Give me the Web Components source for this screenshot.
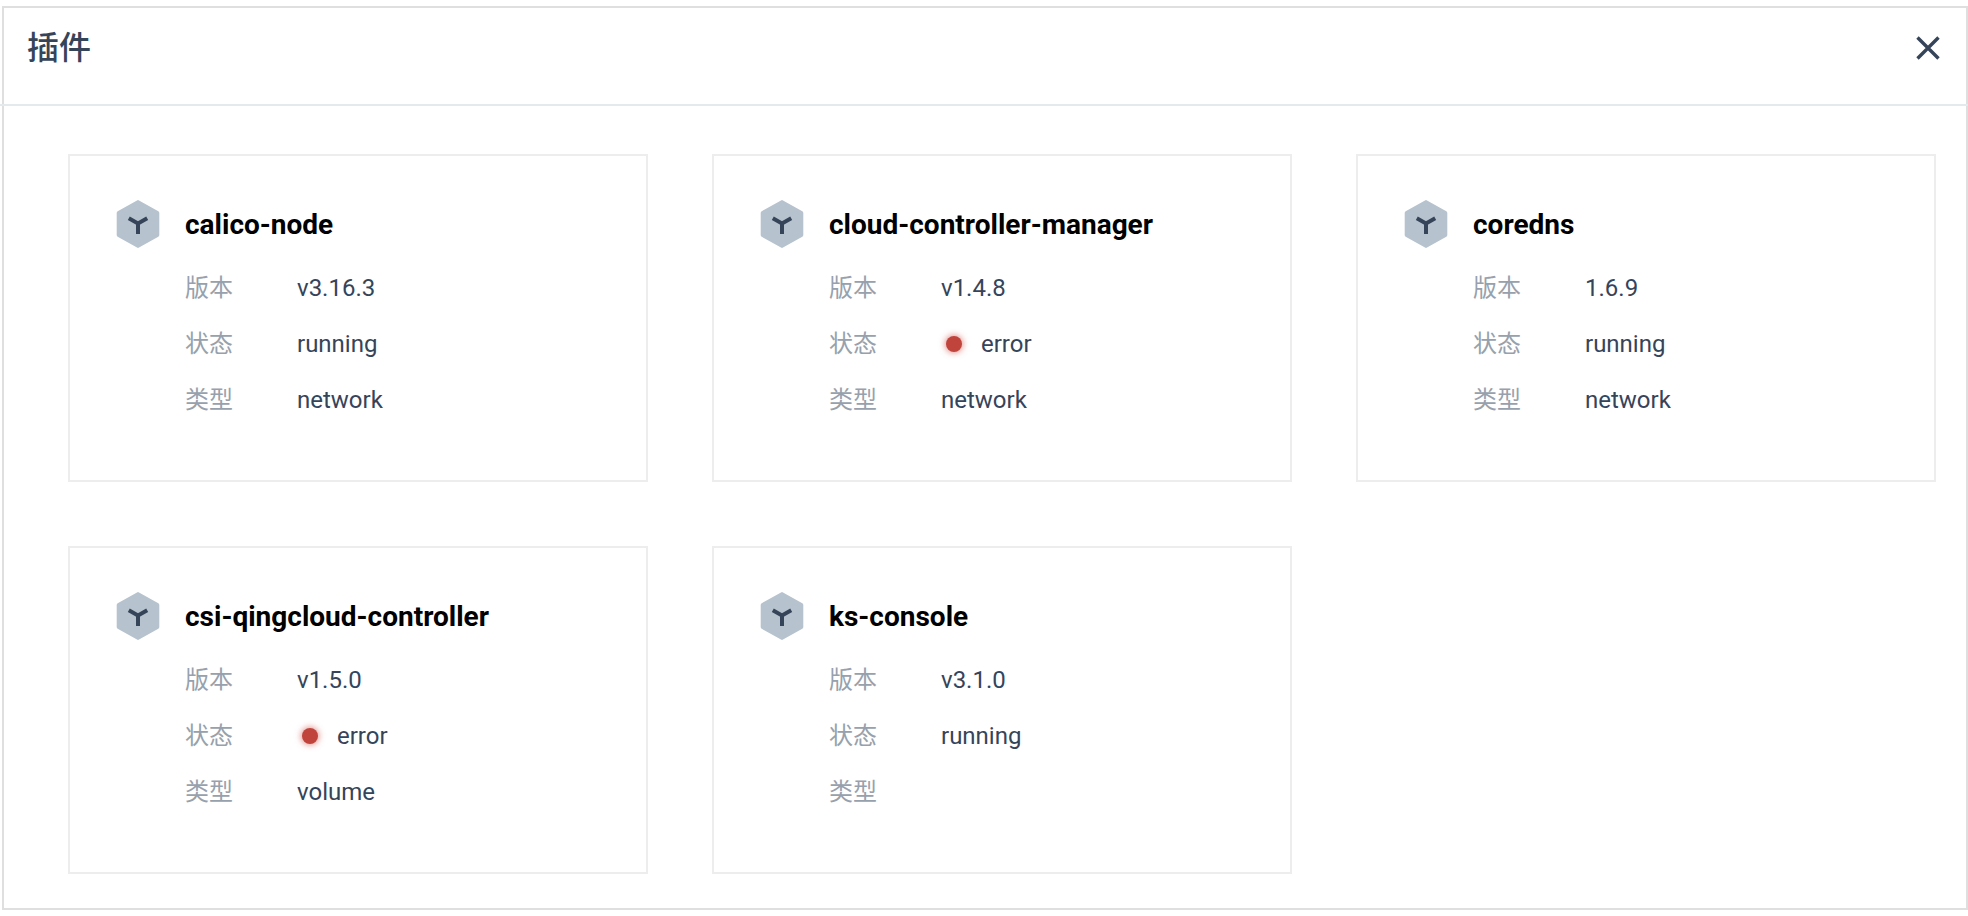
<!DOCTYPE html>
<html lang="zh-CN">
<head>
<meta charset="utf-8">
<meta name="viewport" content="width=device-width, initial-scale=1">
<title>插件</title>
<style>
  body {
    margin: 0;
    background: #fff;
    color: #36445a;
    font-family: Roboto, "Noto Sans CJK SC", sans-serif;
  }
</style>
</head>
<body>
<plugin-panel heading="插件">
  <plugin-card name="calico-node" version="v3.16.3" type="network">running</plugin-card>
  <plugin-card name="cloud-controller-manager" version="v1.4.8" type="network"><status-dot></status-dot>error</plugin-card>
  <plugin-card name="coredns" version="1.6.9" type="network">running</plugin-card>
  <plugin-card name="csi-qingcloud-controller" version="v1.5.0" type="volume"><status-dot></status-dot>error</plugin-card>
  <plugin-card name="ks-console" version="v3.1.0" type="">running</plugin-card>
</plugin-panel>

<template id="panel-template">
  <style>
    :host { display: block; padding: 6px 0 6px 2px; }
    section { border: 2px solid #dfdfdf; }
    header {
      display: flex;
      justify-content: space-between;
      align-items: center;
      height: 96px;
      padding: 0 18px 16px 23px;
      box-sizing: border-box;
    }
    h1 { margin: 0; font-size: 32px; line-height: 48px; font-weight: 500; }
    button {
      display: flex;
      padding: 4px;
      border: 0;
      background: none;
      color: inherit;
      cursor: pointer;
    }
    /* The rule runs through the side borders to the window's edges. */
    hr { margin: 0 -2px 0 -4px; border: 0; height: 2px; background: #e3e9ed; position: relative; }
    .grid {
      display: grid;
      grid-template-columns: repeat(auto-fill, minmax(520px, 1fr));
      gap: 64px;
      padding: 48px 30px 34px 64px;
    }
  </style>
  <section>
    <header>
      <h1></h1>
      <button type="button" aria-label="关闭">
        <svg width="32" height="32" viewBox="0 0 32 32" fill="none" stroke="currentColor" stroke-width="3.400" aria-hidden="true"><path d="M5.500 5.500 26.500 26.500M26.500 5.500 5.500 26.500"/></svg>
      </button>
    </header>
    <hr>
    <div class="grid"><slot></slot></div>
  </section>
</template>

<template id="card-template">
  <style>
    :host {
      display: block;
      box-sizing: border-box;
      min-height: 328px;
      border: 2px solid #ededed;
      padding: 44px 46px;
    }
    article { display: grid; grid-template-columns: 44px 1fr; column-gap: 25px; }
    h2 { margin: 0; font-size: 28px; line-height: 50px; font-weight: 700; color: #000; }
    dl { grid-column: 2; margin: 22px 0 0; display: grid; grid-template-columns: 112px 1fr; font-size: 24px; line-height: 32px; row-gap: 24px; }
    dt { color: #97a1ad; font-weight: 400; }
    dd { margin: 0; display: flex; align-items: center; }
  </style>
  <article>
    <hex-icon></hex-icon>
    <h2></h2>
    <dl>
      <dt>版本</dt><dd class="version"></dd>
      <dt>状态</dt><dd><slot></slot></dd>
      <dt>类型</dt><dd class="type"></dd>
    </dl>
  </article>
</template>

<template id="hex-template">
  <style>:host { display: block; height: 48px; } svg { display: block; }</style>
  <svg width="44" height="48" viewBox="0 0 44 48" aria-hidden="true">
    <path d="M21 .4Q22 -.2 23 .4L42.300 11.200Q43.300 11.800 43.300 13V35Q43.300 36.200 42.300 36.800L23 47.600Q22 48.200 21 47.600L1.700 36.800Q.7 36.200 .7 35V13Q.7 11.800 1.700 11.200Z" fill="#b6c2cd"/>
    <path d="M12.800 18.300 22 23.500 31.200 18.300M22 23V34" fill="none" stroke="#36445a" stroke-width="4"/>
  </svg>
</template>

<template id="dot-template">
  <style>
    :host {
      display: block;
      width: 16px;
      height: 16px;
      margin: 0 19px 0 5px;
      border-radius: 50%;
      background: #c0443c;
      box-shadow: 0 0 6px 1px rgba(202, 70, 60, .6);
    }
  </style>
</template>

<script>
  const stamp = (host, id) => {
    const root = host.attachShadow({ mode: 'open' });
    root.append(document.getElementById(id).content.cloneNode(true));
    return root;
  };

  class HexIcon extends HTMLElement {
    constructor() { super(); stamp(this, 'hex-template'); }
  }

  class StatusDot extends HTMLElement {
    constructor() { super(); stamp(this, 'dot-template'); }
  }

  class PluginCard extends HTMLElement {
    constructor() { super(); stamp(this, 'card-template'); }
    connectedCallback() {
      const find = s => this.shadowRoot.querySelector(s);
      find('h2').textContent = this.getAttribute('name');
      find('.version').textContent = this.getAttribute('version');
      find('.type').textContent = this.getAttribute('type');
    }
  }

  class PluginPanel extends HTMLElement {
    constructor() { super(); stamp(this, 'panel-template'); }
    connectedCallback() {
      this.shadowRoot.querySelector('h1').textContent = this.getAttribute('heading');
      this.shadowRoot.querySelector('button').addEventListener('click', () => this.remove());
    }
  }

  customElements.define('hex-icon', HexIcon);
  customElements.define('status-dot', StatusDot);
  customElements.define('plugin-card', PluginCard);
  customElements.define('plugin-panel', PluginPanel);
</script>
</body>
</html>
